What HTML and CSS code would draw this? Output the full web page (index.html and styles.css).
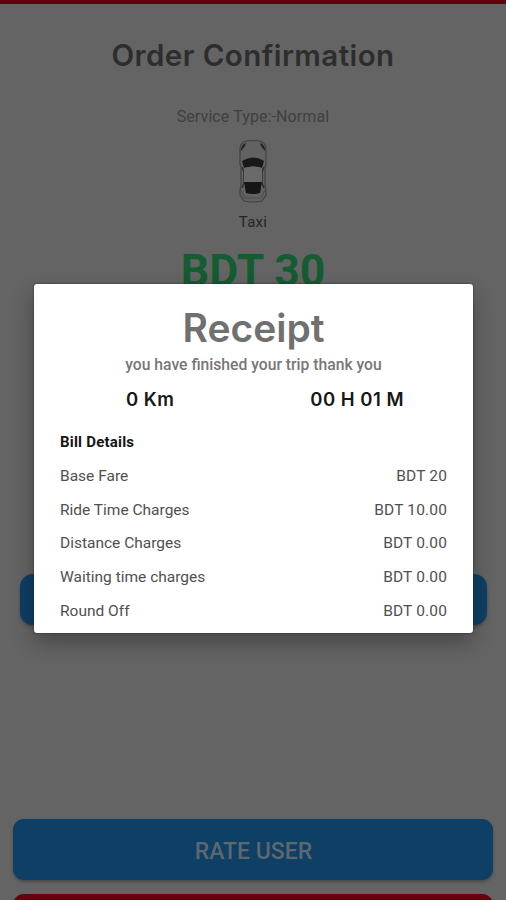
FILE: index.html
```html
<!DOCTYPE html>
<html lang="en">
<head>
<meta charset="utf-8">
<title>Order Confirmation</title>
<link rel="stylesheet" href="styles.css">
</head>
<body>
<div class="screen">
  <main class="order">
    <h1 class="order-title">Order Confirmation</h1>
    <p class="service">Service Type:-Normal</p>
    <svg class="car" viewBox="0 0 30 63" width="30" height="63" aria-hidden="true">
      <path d="M7 1.5Q15-.5 23 1.5Q28 3 28 10V24L27 28V46L28 50V55L24 61Q15 63 6 61L2 55V50L3 46V28L2 24V10Q2 3 7 1.5Z" fill="#626262" stroke="#414141" stroke-width="1.2"/>
      <path d="M3 9Q4 4 8 3L7 6Q5 9 3 11ZM27 9Q26 4 22 3L23 6Q25 9 27 11Z" fill="#252525"/>
      <path d="M4 21Q15 14 26 21L24 28Q15 25 6 28Z" fill="#181818"/>
      <path d="M4 27L6 32V43L4 48M26 27L24 32V43L26 48" fill="none" stroke="#303030" stroke-width="1.5"/>
      <path d="M6 28Q15 25 24 28V42H6Z" fill="#6a6a6a"/>
      <path d="M6 42H24L22 53Q15 55 8 53Z" fill="#151515"/>
      <path d="M3 50L7 58H23L27 50" fill="none" stroke="#4c4c4c"/>
    </svg>
    <p class="vehicle">Taxi</p>
    <p class="total">BDT 30</p>
    <div class="button action"></div>
    <div class="button rate">RATE USER</div>
    <div class="button cancel"></div>
  </main>
  <section class="dialog">
    <h2 class="receipt-title">Receipt</h2>
    <p class="message">you have finished your trip thank you</p>
    <div class="trip"><span>0 Km</span><span>00 H 01 M</span></div>
    <h3 class="bill-title">Bill Details</h3>
    <dl class="bill">
      <div class="row"><dt>Base Fare</dt><dd>BDT 20</dd></div>
      <div class="row"><dt>Ride Time Charges</dt><dd>BDT 10.00</dd></div>
      <div class="row"><dt>Distance Charges</dt><dd>BDT 0.00</dd></div>
      <div class="row"><dt>Waiting time charges</dt><dd>BDT 0.00</dd></div>
      <div class="row"><dt>Round Off</dt><dd>BDT 0.00</dd></div>
    </dl>
  </section>
</div>
</body>
</html>
```
FILE: styles.css
```css
* { box-sizing: border-box; }
body, h1, h2, h3, p, dl, dd { margin: 0; }
body { font-family: Roboto, sans-serif; background: #646464; }
.screen { position: relative; width: 506px; height: 900px; overflow: hidden; background: #646464; border-top: 4px solid #66000b; }
.order { display: flex; flex-direction: column; align-items: center; }
.order-title { margin-top: 32px; font: 600 29.5px/38px Inter, sans-serif; letter-spacing: .43px; color: #2d2d2d; white-space: nowrap; }
.service { margin-top: 33px; font-size: 16px; line-height: 20px; letter-spacing: .1px; color: #404040; }
.car { display: block; margin-top: 13px; }
.vehicle { margin-top: 9px; font-size: 15px; line-height: 20px; letter-spacing: .3px; color: #242424; }
.total { margin-top: 12px; font-size: 44.5px; line-height: 54px; font-weight: 700; color: #145c32; }
.button { display: flex; align-items: center; justify-content: center; border-radius: 11px; background: #0e3f65; box-shadow: 0 2px 3px #4b4b4b; }
.action { width: 467px; height: 51px; margin-top: 276px; border-radius: 13px; }
.rate { width: 480px; height: 61px; margin-top: 194px; padding: 3px 0 0 1px; font-size: 23px; font-weight: 500; color: #5c6770; }
.cancel { width: 480px; height: 61px; margin-top: 14px; background: #68000b; }
.dialog { position: absolute; top: 280px; left: 34px; width: 439px; height: 349px; padding: 22px 26px 0; background: #fff; border-radius: 3px; box-shadow: 0 0 2px #252525, 0 9px 22px rgba(0, 0, 0, .3); color: #505050; }
.receipt-title { text-align: center; font: 600 39px/44px Inter, sans-serif; color: #707070; }
.message { margin-top: 5px; text-align: center; font-size: 15.7px; line-height: 20px; font-weight: 500; color: #777; white-space: nowrap; }
.trip { display: flex; justify-content: space-between; margin-top: 12px; padding: 0 43px 0 66px; font: 600 18.5px/24px Inter, sans-serif; letter-spacing: .5px; color: #171717; }
.bill-title { margin-top: 21px; font-size: 15px; line-height: 20px; font-weight: 700; letter-spacing: .2px; color: #151515; }
.bill { margin-top: 7px; }
.row { display: flex; align-items: center; justify-content: space-between; height: 33.75px; font-size: 15.5px; }
.row dd { letter-spacing: .15px; }
```
